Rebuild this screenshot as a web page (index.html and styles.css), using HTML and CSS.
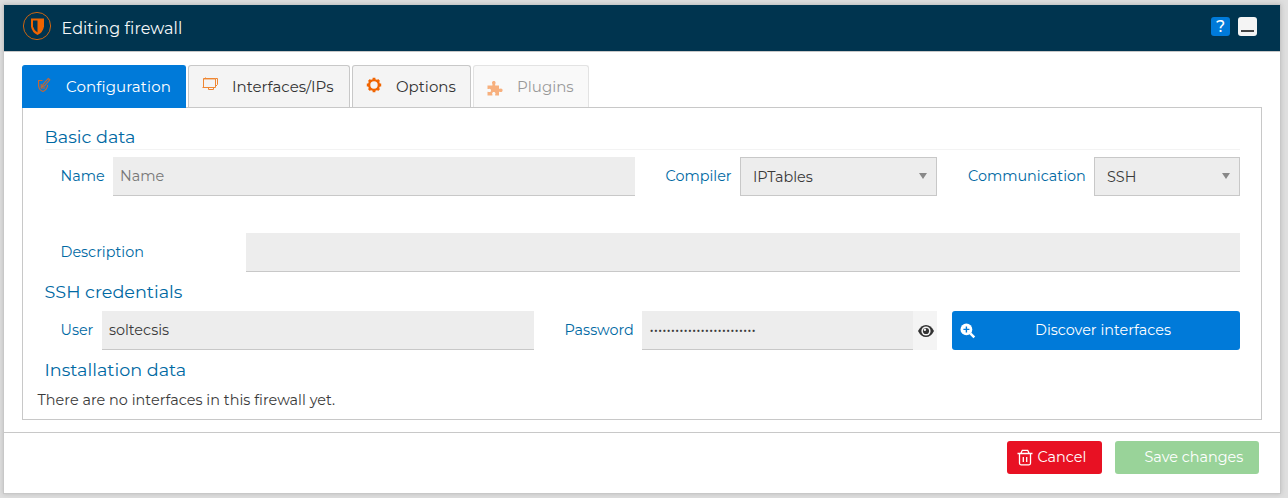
FILE: index.html
```html
<!DOCTYPE html>
<html lang="en">
<head>
<meta charset="utf-8">
<title>Editing firewall</title>
<link rel="stylesheet" href="styles.css">
</head>
<body>
<main class="dialog">
  <header class="titlebar">
    <svg class="logo" viewBox="0 0 30 30"><circle cx="15" cy="15" r="13.600" fill="none" stroke="#c96413"/><path d="M9 7.500h13v8q-1 6-6.500 8.500-5.500-2.500-6.500-8.500z" fill="#f06400"/><path d="M11 9.500H15.500v12q-3.500-2-4.500-6z" fill="#00344f"/></svg>
    <h1 class="title">Editing firewall</h1>
    <button class="tool help">?</button>
    <button class="tool minimize"><span class="dash"></span></button>
  </header>
  <section class="content">
    <nav class="tabs">
      <button class="tab active t-config"><svg class="tab-icon" viewBox="0 0 16 16" fill="none" stroke="#d0672a" stroke-width="1.100"><path d="M6.500 3.500H2.600v5.500q.6 4.200 4.400 5.500 4.300-1.800 4.600-6.500"/><path d="M6.500 9.500l.6-2.300L12.300 1.500l1.500 1.400L8.600 8.800zM5.200 7v4h4"/></svg><span>Configuration</span></button>
      <button class="tab t-interfaces"><svg class="tab-icon" viewBox="0 0 16 16" fill="none" stroke="#ef8632" stroke-width="1"><path d="M1.500 1.500h12v9h-12zM3.500 1.500V.5M13.500 1.500h2v6l-2 2M.5 10.500h2M6.500 11v1.500h5V11"/><path d="M1.500 2.200h12" stroke-width=".6"/></svg><span>Interfaces/IPs</span></button>
      <button class="tab t-options"><svg class="tab-icon" viewBox="0 0 16 16"><circle cx="8" cy="8" r="4.900" fill="none" stroke="#f06400" stroke-width="2.400"/><path d="M8 .8v2M8 13.200v2M.8 8h2M13.200 8h2M2.900 2.900l1.400 1.400M11.700 11.700l1.400 1.400M2.900 13.100l1.400-1.400M11.700 4.300l1.400-1.400" stroke="#f06400" stroke-width="2.800"/></svg><span>Options</span></button>
      <button class="tab disabled t-plugins"><svg class="tab-icon" viewBox="0 0 16 16" fill="#f06400"><path d="M.5 5.500h4.800c.6-.7-.3-1.500-.3-2.700C5 1.400 5.800.9 6.800.9s1.800.6 1.800 1.900c0 1.200-.9 2-.3 2.700H12v3.200c.5.400 1-.3 1.900-.3 1.100 0 1.700.8 1.700 1.800s-.6 1.900-1.700 1.900c-.9 0-1.400-.8-1.900-.3v3.700H8.300c-.6-.6.2-1.200.2-2 0-.9-.8-1.500-1.700-1.500s-1.700.6-1.700 1.500c0 .8.800 1.400.2 2H.5v-3.600c.6-.6 1.100.2 2 .2s1.500-.8 1.500-1.700-.6-1.700-1.500-1.700-1.400.8-2 .2z"/></svg><span>Plugins</span></button>
    </nav>
    <div class="panel">
      <h2 class="heading ruled">Basic data</h2>
      <div class="row first">
        <label class="label">Name</label><div class="field name placeholder">Name</div>
        <label class="label compiler">Compiler</label><div class="select ipt"><span>IPTables</span><i class="arrow"></i></div>
        <label class="label comm">Communication</label><div class="select ssh"><span>SSH</span><i class="arrow"></i></div>
      </div>
      <div class="row second"><label class="label description">Description</label><div class="field grow"></div></div>
      <h2 class="heading credentials">SSH credentials</h2>
      <div class="row third">
        <label class="label">User</label><div class="field user">soltecsis</div>
        <label class="label password">Password</label><div class="field secret">•••••••••••••••••••••••••</div>
        <button class="eye"><svg viewBox="0 0 18 14"><path d="M1 7q3-6 8-6t8 6q-3 6-8 6T1 7z" fill="#333"/><circle cx="9" cy="7" r="4.600" fill="#f4f4f4"/><circle cx="9" cy="7" r="3.100" fill="#333"/><circle cx="7.900" cy="5.800" r="1.200" fill="#f4f4f4"/></svg></button>
        <button class="discover"><svg viewBox="0 0 16 16"><circle cx="6.400" cy="6.400" r="5.900" fill="#fff"/><path d="M10.300 10.300l4 4" stroke="#fff" stroke-width="2.500"/><path d="M6.400 3.400v6M3.400 6.400h6" stroke="#007ad9" stroke-width="1.400"/></svg><span>Discover interfaces</span></button>
      </div>
      <h2 class="heading install">Installation data</h2>
      <p class="message">There are no interfaces in this firewall yet.</p>
    </div>
  </section>
  <footer class="footer">
    <button class="action cancel"><svg viewBox="0 0 16 17" fill="none" stroke="#fff" stroke-width="1.300"><path d="M.5 4.500h15M2.500 4.500v9.800q0 1.500 1.500 1.500h8q1.500 0 1.500-1.500V4.500M4 4l1.300-2.700h5.400L12 4M6.300 8v5M9.700 8v5"/></svg><span>Cancel</span></button>
    <button class="action save"><span>Save changes</span></button>
  </footer>
</main>
</body>
</html>
```
FILE: styles.css
```css
* { box-sizing: border-box; }
body { margin: 0; height: 498px; padding: 4px 7px 4px 3px; background: #dfdfdf; font: 400 14.4px Montserrat, Inter, sans-serif; color: #3a3a3a; overflow: hidden; }
button { font: inherit; color: inherit; border: 0; padding: 0; }
h1, h2, p { margin: 0; font-weight: 400; white-space: nowrap; }
svg { display: block; flex: none; }
.dialog { height: 490px; background: #fff; border: 1px solid #c8c8c8; box-shadow: 0 0 5px #bbb; display: flex; flex-direction: column; }
.titlebar { height: 47px; flex: none; background: #00344f; border-bottom: 1px solid #c8c8c8; display: flex; align-items: flex-start; padding: 6px 23px 0 18px; }
.logo { width: 30px; height: 30px; }
.title { margin: 7px auto 0 9.5px; font-size: 16px; line-height: 22px; letter-spacing: .08px; color: #f4f7f9; }
.tool { width: 19px; height: 19px; margin-top: 6px; border-radius: 3px; }
.help { background: #007ad9; color: #fff; font-size: 16px; font-weight: 500; line-height: 19px; }
.minimize { margin-left: 8px; background: #f4f4f4; display: flex; justify-content: center; padding-top: 13px; }
.dash { width: 13px; height: 2px; background: #444; }
.content { height: 380px; flex: none; padding: 13px 18px 0; }
.tabs { height: 43px; display: flex; gap: 2px; margin-bottom: -1px; position: relative; }
.tab { height: 42px; background: #f4f4f4; border: 1px solid #c8c8c8; border-bottom: 0; border-radius: 3px 3px 0 0; padding: 11px 0 0 13px; display: flex; font-size: 15px; line-height: 19px; color: #333; white-space: nowrap; }
.tab-icon { width: 16px; height: 16px; margin-right: 14px; }
.active { height: 43px; background: #007ad9; border-color: #007ad9; color: #fff; }
.disabled { opacity: .5; }
.t-config { width: 164px; letter-spacing: .14px; }
.t-interfaces { width: 162px; }
.t-options { width: 119px; }
.t-plugins { width: 116px; }
.t-plugins .tab-icon { margin-top: 3px; }
.panel { height: 313px; border: 1px solid #c8c8c8; padding: 18px 21px 0 22px; }
.heading { color: #0069a3; font-size: 17.6px; line-height: 22px; height: 22px; text-indent: -.5px; }
.ruled { height: 24px; border-bottom: 1px solid #f3f3f3; }
.row { height: 39px; display: flex; line-height: 39px; white-space: nowrap; padding-left: 16px; }
.first { margin-top: 7px; }
.second { margin-top: 37px; }
.label { width: 52px; flex: none; color: #0069a3; text-indent: -.5px; }
.field { background: #ededed; border-bottom: 1px solid #c8c8c8; padding-left: 7px; overflow: hidden; }
.placeholder { color: #777; }
.grow { flex: 1; }
.name { width: 522px; }
.compiler { width: 75px; margin-left: 30px; text-indent: .5px; }
.select { border: 1px solid #c8c8c8; background: #ededed; padding: 1px 9px 0 12px; display: flex; align-items: center; justify-content: space-between; }
.ipt { width: 197px; }
.comm { width: 126px; margin-left: 31px; text-indent: 0; }
.ssh { width: 146px; }
.arrow { border: 4.5px solid transparent; border-width: 6px 4.5px 0; border-top-color: #888; margin-bottom: 2px; }
.description { width: 185px; }
.credentials { margin-top: 9px; }
.third { margin-top: 8px; }
.third .label:first-child { width: 41px; }
.user { width: 432px; }
.third .password { width: 77px; margin-left: 31px; }
.secret { width: 271px; padding-left: 7.5px; }
.eye { width: 24px; background: #f4f4f4; display: flex; align-items: center; justify-content: center; padding-left: 2px; }
.eye svg { width: 18px; height: 14px; }
.discover { width: 288px; margin-left: 15px; background: #007ad9; border-radius: 3px; color: #fff; display: flex; align-items: center; padding-left: 8px; }
.discover svg { width: 16px; height: 16px; }
.discover span { flex: 1; text-align: center; margin-right: 10px; }
.install { margin-top: 9px; }
.message { margin: 9px 0 0 -7.5px; line-height: 20px; letter-spacing: .03px; }
.footer { flex: 1; border-top: 1px solid #c8c8c8; display: flex; justify-content: flex-end; padding: 8px 21px 0; gap: 13px; }
.action { height: 33px; border-radius: 3px; color: #fff; display: flex; align-items: center; padding-bottom: 1px; white-space: nowrap; }
.cancel { width: 95px; background: #e81123; padding-left: 9.5px; }
.cancel svg { width: 16px; height: 17px; margin-right: 5px; }
.save { width: 144px; background: #99d399; padding-left: 29.5px; }
```
